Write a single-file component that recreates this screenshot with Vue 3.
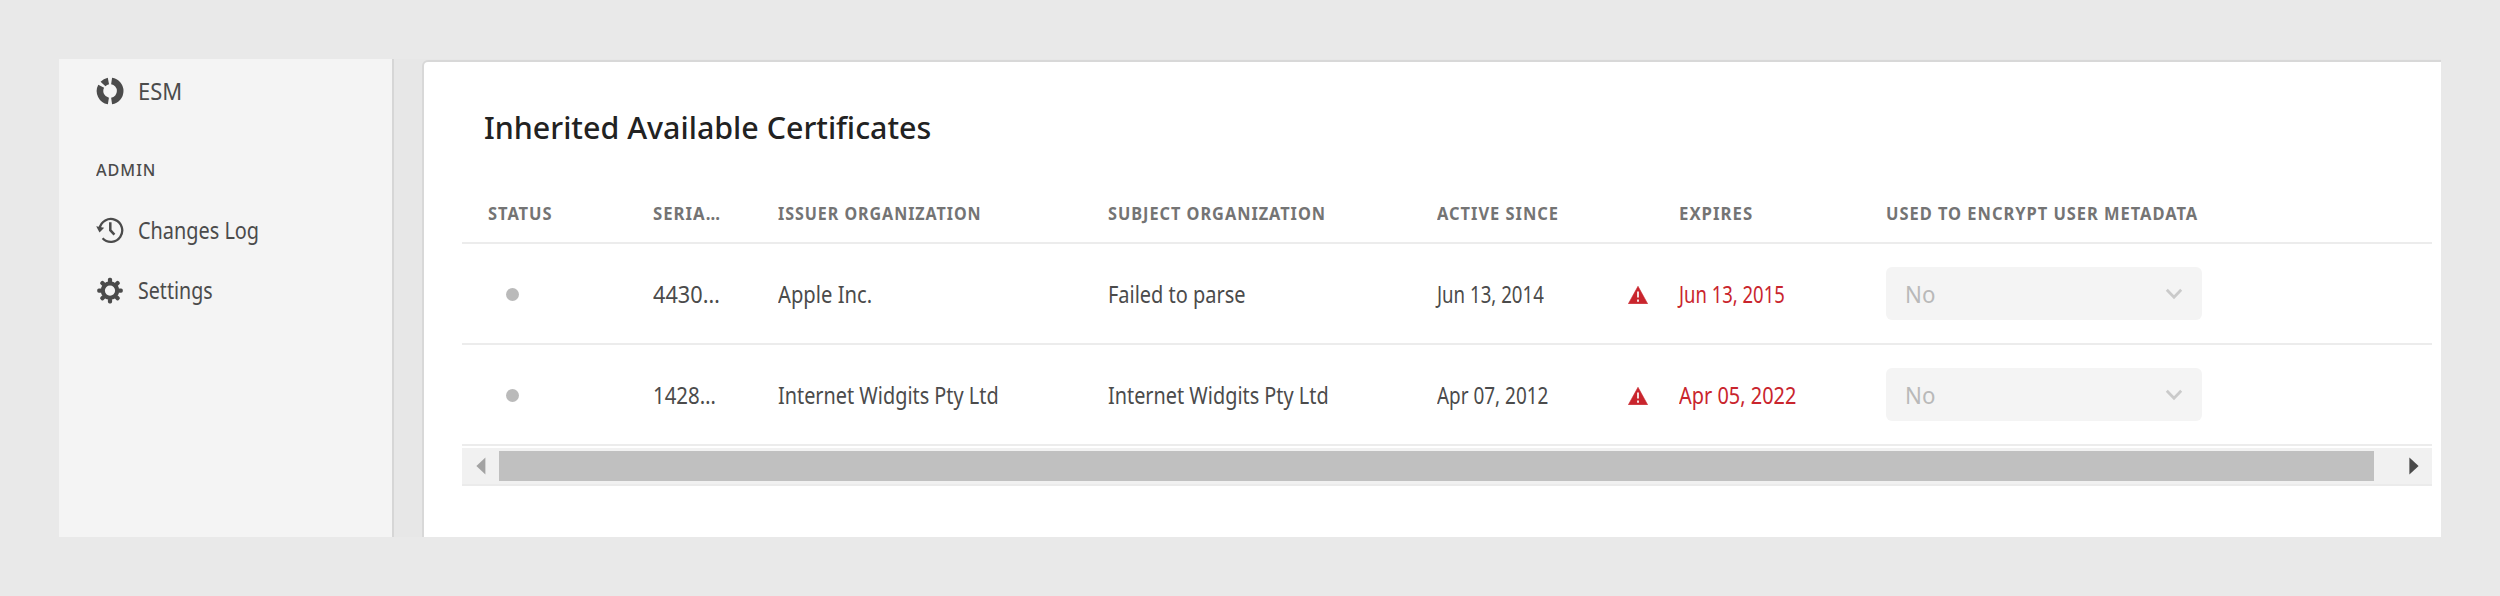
<script setup>
const columns = [
  { label: 'STATUS', width: 65, cls: 'status' },
  { label: 'SERIA…', width: 68 },
  { label: 'ISSUER ORGANIZATION', width: 204 },
  { label: 'SUBJECT ORGANIZATION', width: 218 },
  { label: 'ACTIVE SINCE', width: 122 },
  { label: '', width: 0 },
  { label: 'EXPIRES', width: 74 },
  { label: 'USED TO ENCRYPT USER METADATA', width: 312 },
]

const rows = [
  {
    serial: ['4430…', 67],
    issuer: ['Apple Inc.', 94],
    subject: ['Failed to parse', 138],
    since: ['Jun 13, 2014', 107],
    expires: ['Jun 13, 2015', 106],
  },
  {
    serial: ['1428…', 63],
    issuer: ['Internet Widgits Pty Ltd', 221],
    subject: ['Internet Widgits Pty Ltd', 221],
    since: ['Apr 07, 2012', 111],
    expires: ['Apr 05, 2022', 117],
  },
]

// Condenses a label horizontally so that it takes the given width.
const vFit = {
  mounted(el, { value }) {
    if (value) el.style.transform = `scaleX(${value / el.offsetWidth})`
  },
}
</script>

<template>
  <div class="page">
    <div class="frame">
      <nav class="sidebar">
        <a class="item">
          <svg class="icon" viewBox="0 0 28 28">
            <g fill="none" stroke="#4b4b4b" stroke-width="6.6">
              <path d="M15.6 4.1A10 10 0 0 1 15.6 23.9" />
              <path d="M12.4 23.9A10 10 0 0 1 5.2 9.3" />
              <path d="M7 7.1A10 10 0 0 1 12.4 4.1" />
            </g>
          </svg>
          <span v-fit="44" class="text">ESM</span>
        </a>
        <div class="group"><span v-fit="60" class="text">ADMIN</span></div>
        <a class="item">
          <svg class="icon" viewBox="0 0 28 28">
            <path d="M3.6 12.5A11.4 11.4 0 1 1 6.6 22.3" fill="none" stroke="#4b4b4b" stroke-width="2.3" />
            <path d="M0.2 10.2L8.2 11.8L3.5 16.4Z" fill="#4b4b4b" />
            <path d="M14.3 6.2V14.2L18.4 18.6" fill="none" stroke="#4b4b4b" stroke-width="2.5" />
          </svg>
          <span v-fit="121" class="text">Changes Log</span>
        </a>
        <a class="item">
          <svg class="icon" viewBox="0 0 28 28">
            <circle cx="14" cy="14.6" r="7.2" fill="none" stroke="#4b4b4b" stroke-width="4.2" />
            <g fill="#4b4b4b">
              <rect
                v-for="n in 8"
                :key="n"
                x="11.9"
                y="1.8"
                width="4.2"
                height="5"
                rx="1.6"
                :transform="`rotate(${n * 45} 14 14.6)`"
              />
            </g>
          </svg>
          <span v-fit="75" class="text">Settings</span>
        </a>
      </nav>

      <main class="card">
        <h1><span v-fit="447" class="text">Inherited Available Certificates</span></h1>

        <div class="table">
          <div class="row head">
            <div v-for="(c, i) in columns" :key="i" :class="c.cls">
              <span v-fit="c.width" class="text">{{ c.label }}</span>
            </div>
          </div>
          <div v-for="(r, i) in rows" :key="i" class="row body">
            <div><span class="dot"></span></div>
            <div><span v-fit="r.serial[1]" class="text">{{ r.serial[0] }}</span></div>
            <div><span v-fit="r.issuer[1]" class="text">{{ r.issuer[0] }}</span></div>
            <div><span v-fit="r.subject[1]" class="text">{{ r.subject[0] }}</span></div>
            <div><span v-fit="r.since[1]" class="text">{{ r.since[0] }}</span></div>
            <div>
              <svg class="alert" viewBox="0 0 20 18">
                <path d="M10 0.3L19.6 17.7H0.4Z" fill="#c9252d" stroke="#c9252d" stroke-width="0.6" stroke-linejoin="round" />
                <path d="M10 5.6V11.6M10 13.4V15.8" stroke="#fff" stroke-width="2" opacity="0.85" />
              </svg>
            </div>
            <div class="expired"><span v-fit="r.expires[1]" class="text">{{ r.expires[0] }}</span></div>
            <div>
              <div class="select">
                <span v-fit="30" class="text">No</span>
                <svg class="chevron" viewBox="0 0 18 12">
                  <path d="M1.8 1.8L9 9.2L16.2 1.8" fill="none" stroke="#cacaca" stroke-width="2.8" />
                </svg>
              </div>
            </div>
          </div>
        </div>

        <div class="scrollbar">
          <svg class="arrow" viewBox="0 0 10 18"><path d="M9.4 0.5V17.5L0.4 9Z" fill="#a3a3a3" /></svg>
          <div class="thumb"></div>
          <svg class="arrow" viewBox="0 0 10 18"><path d="M0.4 0.5V17.5L9.6 9Z" fill="#4a4a4a" /></svg>
        </div>
      </main>
    </div>
  </div>
</template>

<style>
html,
body {
  background: #e9e9e9;
}
</style>

<style scoped>
.page {
  box-sizing: border-box;
  width: 2500px;
  height: 596px;
  padding: 59px;
  background: #e9e9e9;
  font-family: "Noto Sans", "Open Sans", sans-serif;
  font-size: 23px;
  color: #4b4b4b;
}
.frame {
  display: flex;
  height: 478px;
  background: #e7e7e7;
}
.text {
  display: inline-block;
  white-space: nowrap;
  transform-origin: 0 50%;
}
.sidebar {
  box-sizing: border-box;
  width: 335px;
  padding: 2px 0 0 37px;
  background: #f4f4f4;
  border-right: 2px solid #d6d6d6;
}
.item {
  display: flex;
  align-items: center;
  height: 60px;
}
.icon {
  width: 28px;
  height: 28px;
  margin-right: 14px;
}
.group {
  height: 42px;
  margin: 28px 0 9px;
  font-size: 17px;
  line-height: 42px;
  font-weight: 500;
  letter-spacing: 1px;
}
.card {
  box-sizing: border-box;
  flex: 1;
  margin: 1px 0 0 28px;
  background: #fff;
  border: solid #d8d8d8;
  border-width: 2px 0 0 2px;
  border-radius: 6px 0 0 0;
}
h1 {
  height: 44px;
  margin: 43px 0 1px 60px;
  font-size: 31px;
  line-height: 44px;
  font-weight: 500;
  color: #222;
}
.table {
  width: 1970px;
  margin-left: 38px;
}
.row {
  box-sizing: border-box;
  display: grid;
  grid-template-columns: 191px 125px 330px 329px 191px 51px 207px 1fr;
  align-items: center;
  border-bottom: 2px solid #ececec;
}
.head {
  height: 94px;
  padding-top: 35px;
  font-size: 17px;
  font-weight: 700;
  letter-spacing: 1px;
  color: #747474;
}
.status {
  padding-left: 26px;
}
.body {
  height: 101px;
}
.dot {
  display: block;
  width: 13px;
  height: 13px;
  margin: 2px 0 0 44px;
  border-radius: 50%;
  background: #bababa;
}
.alert {
  display: block;
  width: 20px;
  height: 18px;
  margin-top: 3px;
}
.expired {
  color: #c9252d;
}
.select {
  box-sizing: border-box;
  display: flex;
  align-items: center;
  justify-content: space-between;
  width: 316px;
  height: 53px;
  padding: 0 19px;
  border-radius: 6px;
  background: #f4f4f4;
  color: #b9b9b9;
}
.chevron {
  width: 18px;
  height: 12px;
}
.scrollbar {
  box-sizing: border-box;
  display: flex;
  align-items: center;
  width: 1970px;
  height: 38px;
  margin: 2px 0 0 38px;
  padding: 0 13px 0 14px;
  background: #f1f1f1;
  border-bottom: 2px solid #ebebeb;
}
.thumb {
  width: 1875px;
  height: 30px;
  margin: 0 auto 0 13px;
  background: #c0c0c0;
}
.arrow {
  width: 10px;
  height: 18px;
}
</style>
